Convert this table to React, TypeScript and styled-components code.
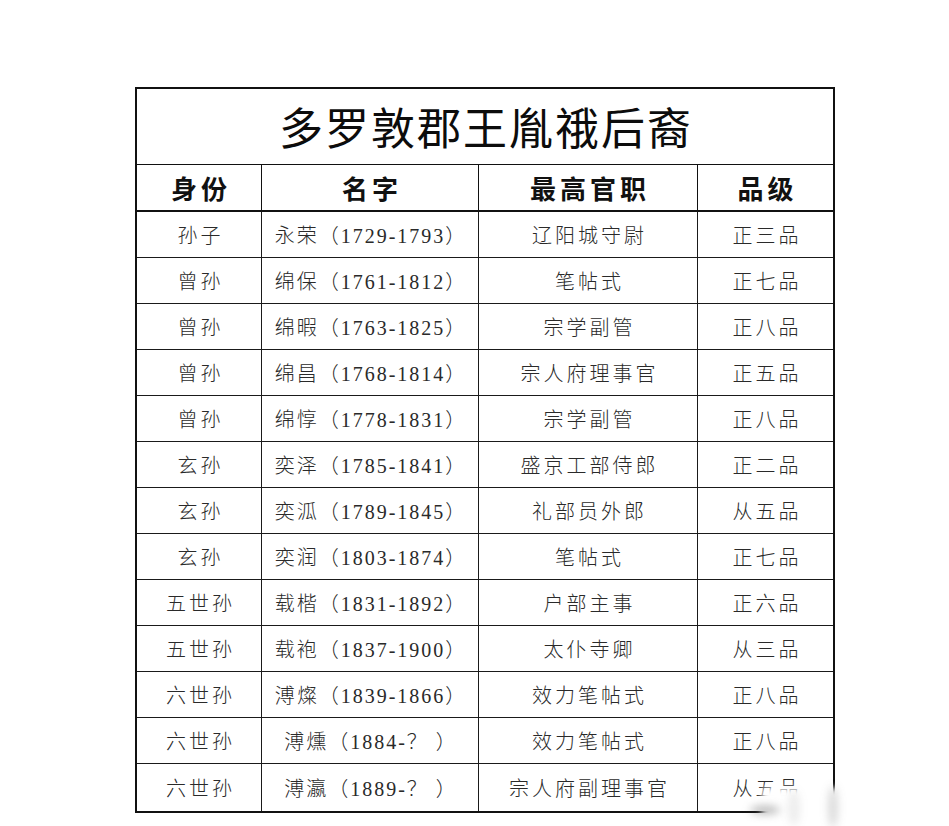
import React from "react";
import styled, { createGlobalStyle } from "styled-components";

const GlobalStyle = createGlobalStyle`
  html, body {
    margin: 0;
    padding: 0;
    background: #fff;
  }
`;

const Page = styled.div`
  position: relative;
  width: 949px;
  height: 826px;
  overflow: hidden;
  padding: 87px 0 0 135px;
  box-sizing: border-box;
  background: #fff;
`;

const Sheet = styled.table`
  width: 700px;
  table-layout: fixed;
  border-collapse: separate;
  border-spacing: 0;
  border: 2px solid #111;
  box-sizing: border-box;
`;

const TitleCell = styled.th`
  height: 76px;
  box-sizing: border-box;
  padding: 0 0 2px 2px;
  border-bottom: 1px solid #111;
  font-family: "Noto Sans CJK SC", sans-serif;
  font-weight: 400;
  font-size: 44px;
  letter-spacing: 2px;
  color: #0c0c0c;
  text-align: center;
  vertical-align: middle;
`;

const HeadCell = styled.th<{ $last?: boolean }>`
  height: 47px;
  box-sizing: border-box;
  padding: 0 0 0 4px;
  border-bottom: 2px solid #111;
  border-right: ${(p) => (p.$last ? "none" : "1px solid #111")};
  font-family: "Noto Sans CJK SC", sans-serif;
  font-weight: 700;
  font-size: 26px;
  letter-spacing: 4px;
  color: #111;
  text-align: center;
  vertical-align: middle;
`;

const Cell = styled.td<{ $last?: boolean; $bottom?: boolean; $tight?: boolean }>`
  height: ${(p) => (p.$bottom ? "47px" : "46px")};
  box-sizing: border-box;
  padding: 0 0 0 ${(p) => (p.$tight ? "2px" : "3px")};
  border-bottom: ${(p) => (p.$bottom ? "none" : "1px solid #1a1a1a")};
  border-right: ${(p) => (p.$last ? "none" : "1px solid #1a1a1a")};
  font-family: "Liberation Serif", "Noto Sans CJK SC", serif;
  font-weight: 300;
  font-size: 20px;
  letter-spacing: ${(p) => (p.$tight ? "2px" : "3px")};
  color: #2a2a2a;
  text-align: center;
  vertical-align: middle;
  white-space: nowrap;
`;

const Smudge = styled.div`
  position: absolute;
  left: 740px;
  top: 776px;
  width: 130px;
  height: 50px;
  pointer-events: none;
`;

const Wash = styled.div`
  position: absolute;
  left: 22px;
  top: 12px;
  width: 108px;
  height: 44px;
  background: #fff;
  filter: blur(3px);
`;

const Streak = styled.div<{ $x: number; $y: number; $w: number; $h: number; $o: number }>`
  position: absolute;
  left: ${(p) => p.$x}px;
  top: ${(p) => p.$y}px;
  width: ${(p) => p.$w}px;
  height: ${(p) => p.$h}px;
  border-radius: 50%;
  background: rgba(70, 70, 70, ${(p) => p.$o});
  filter: blur(4px);
`;

const rows: [string, string, string, string][] = [
  ["孙子", "永荣（1729-1793）", "辽阳城守尉", "正三品"],
  ["曾孙", "绵保（1761-1812）", "笔帖式", "正七品"],
  ["曾孙", "绵暇（1763-1825）", "宗学副管", "正八品"],
  ["曾孙", "绵昌（1768-1814）", "宗人府理事官", "正五品"],
  ["曾孙", "绵惇（1778-1831）", "宗学副管", "正八品"],
  ["玄孙", "奕泽（1785-1841）", "盛京工部侍郎", "正二品"],
  ["玄孙", "奕泒（1789-1845）", "礼部员外郎", "从五品"],
  ["玄孙", "奕润（1803-1874）", "笔帖式", "正七品"],
  ["五世孙", "载楷（1831-1892）", "户部主事", "正六品"],
  ["五世孙", "载袍（1837-1900）", "太仆寺卿", "从三品"],
  ["六世孙", "溥燦（1839-1866）", "效力笔帖式", "正八品"],
  ["六世孙", "溥燻（1884-？ ）", "效力笔帖式", "正八品"],
  ["六世孙", "溥瀛（1889-？ ）", "宗人府副理事官", "从五品"],
];

export default function App() {
  return (
    <>
      <GlobalStyle />
      <Page>
        <Sheet>
          <colgroup>
            <col style={{ width: 125 }} />
            <col style={{ width: 217 }} />
            <col style={{ width: 219 }} />
            <col style={{ width: 135 }} />
          </colgroup>
          <thead>
            <tr>
              <TitleCell colSpan={4}>多罗敦郡王胤䄉后裔</TitleCell>
            </tr>
            <tr>
              <HeadCell>身份</HeadCell>
              <HeadCell>名字</HeadCell>
              <HeadCell>最高官职</HeadCell>
              <HeadCell $last>品级</HeadCell>
            </tr>
          </thead>
          <tbody>
            {rows.map((r, i) => {
              const bottom = i === rows.length - 1;
              return (
                <tr key={i}>
                  <Cell $bottom={bottom}>{r[0]}</Cell>
                  <Cell $bottom={bottom} $tight>
                    {r[1]}
                  </Cell>
                  <Cell $bottom={bottom}>{r[2]}</Cell>
                  <Cell $bottom={bottom} $last>
                    {r[3]}
                  </Cell>
                </tr>
              );
            })}
          </tbody>
        </Sheet>
        {/* blurred watermark over the last row */}
        <Smudge>
          <Wash />
          <Streak $x={10} $y={30} $w={30} $h={8} $o={0.4} />
          <Streak $x={48} $y={14} $w={12} $h={36} $o={0.1} />
          <Streak $x={88} $y={10} $w={10} $h={42} $o={0.2} />
        </Smudge>
      </Page>
    </>
  );
}
